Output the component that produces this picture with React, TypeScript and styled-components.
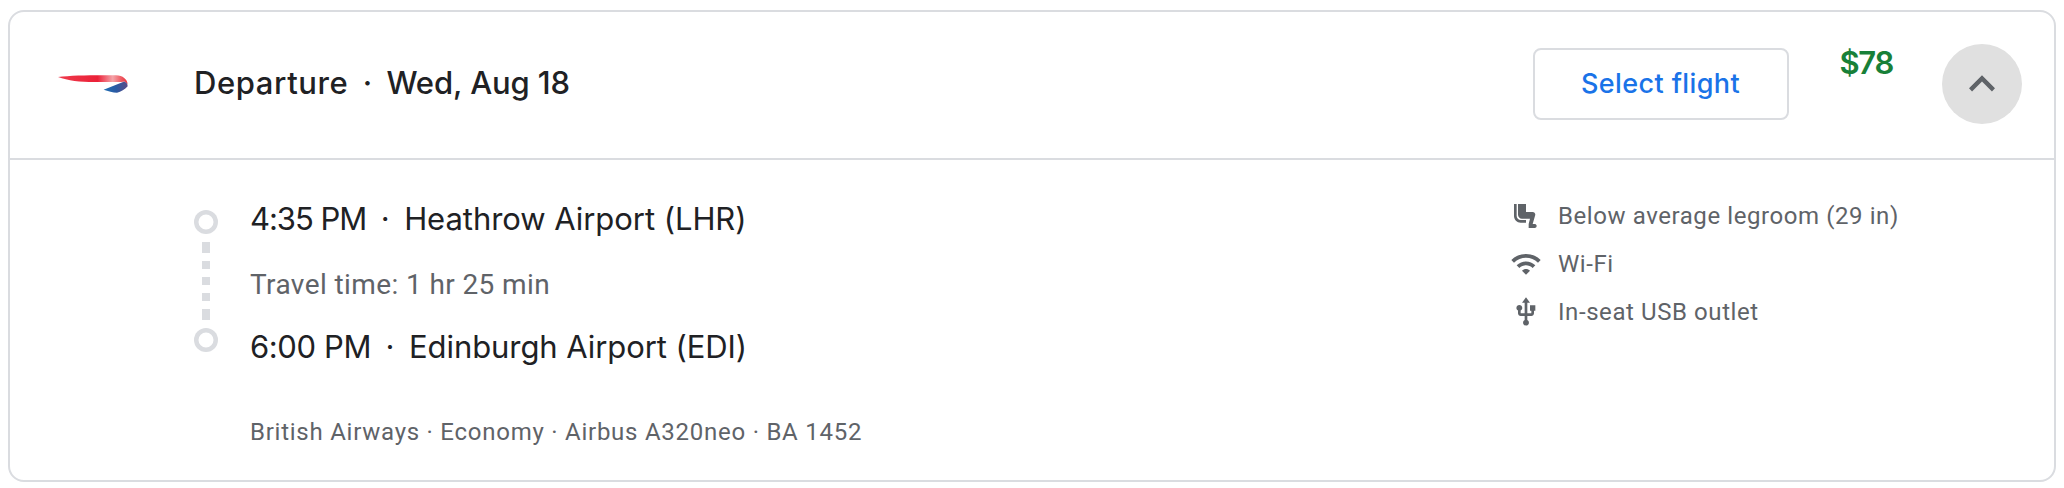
import React from "react";
import styled, { createGlobalStyle } from "styled-components";

const GlobalStyle = createGlobalStyle`
  *, *::before, *::after { box-sizing: border-box; }
  body { margin: 0; background: #fff; }
`;

const display = `Inter, "Liberation Sans", sans-serif`;
const body = `Roboto, "Liberation Sans", sans-serif`;

const Page = styled.main`
  height: 488px;
  padding: 10px 8px 6px;
  background: #fff;
`;

const Card = styled.section`
  display: flex;
  flex-direction: column;
  height: 472px;
  border: 2px solid #dadce0;
  border-radius: 16px;
  overflow: hidden;
`;

const Header = styled.header`
  display: flex;
  align-items: center;
  height: 148px;
  padding: 0 32px 2px 48px;
  border-bottom: 2px solid #dadce0;
`;

const Logo = styled.svg`
  display: block;
  width: 72px;
  height: 24px;
  margin-right: 64px;
`;

const Title = styled.h3`
  display: flex;
  flex: 1;
  margin: 0;
  padding-bottom: 3px;
  font: 500 31px/40px ${display};
  color: #202124;
`;

const Segment = styled.span<{ $spacing: number }>`
  letter-spacing: ${(p) => p.$spacing}px;
  white-space: nowrap;
`;

const Separator = styled.span`
  width: 38px;
  text-align: center;
`;

const SelectButton = styled.button`
  width: 256px;
  height: 72px;
  padding: 0 1px 1px 0;
  border: 2px solid #dadce0;
  border-radius: 8px;
  background: #fff;
  font: 500 27px/36px ${display};
  letter-spacing: 0.4px;
  color: #1a73e8;
`;

const Price = styled.span`
  align-self: flex-start;
  width: 104px;
  margin-top: 31px;
  font: 600 31px/40px ${display};
  letter-spacing: -1.3px;
  text-align: right;
  color: #188038;
`;

const Toggle = styled.button`
  display: flex;
  align-items: center;
  justify-content: center;
  width: 80px;
  height: 80px;
  margin-left: 49px;
  padding: 0;
  border: 0;
  border-radius: 50%;
  background: #e0e0e0;
`;

const Icon = styled.svg<{ $size: number }>`
  display: block;
  flex: none;
  width: ${(p) => p.$size}px;
  height: ${(p) => p.$size}px;
  fill: #5f6368;
`;

const Details = styled.div`
  display: flex;
  flex: 1;
  padding-left: 184px;
`;

const Track = styled.div`
  display: flex;
  flex-direction: column;
  align-items: center;
  gap: 8px;
  width: 24px;
  padding-top: 50px;
`;

const Stop = styled.span`
  width: 24px;
  height: 24px;
  border-radius: 50%;
  box-shadow: inset 0 0 0 4.5px #dadce0;
`;

const Dash = styled.span<{ $length: number }>`
  width: 8px;
  height: ${(p) => p.$length}px;
  background: #dadce0;
`;

const Itinerary = styled.div`
  flex: 1;
  margin-left: 32px;
  padding-top: 39px;
`;

const Endpoint = styled.div`
  display: flex;
  font: 400 31px/40px ${display};
  color: #202124;
`;

const TravelTime = styled.div`
  margin: 28px 0 24px;
  font: 400 28px/36px ${body};
  letter-spacing: 0.4px;
  color: #5f6368;
`;

const FlightInfo = styled.div`
  margin-top: 49px;
  font: 400 24px/32px ${body};
  letter-spacing: 0.75px;
  color: #5f6368;
`;

const Amenities = styled.ul`
  display: flex;
  flex-direction: column;
  gap: 16px;
  width: 544px;
  margin: 0;
  padding: 40px 0 0;
  list-style: none;
`;

const Amenity = styled.li`
  display: flex;
  gap: 16px;
  font: 400 24px/32px ${body};
  letter-spacing: 0.58px;
  color: #5f6368;
`;

const amenities = [
  {
    label: "Below average legroom (29 in)",
    path: "M19.97 19.2c.18.96-.55 1.8-1.47 1.8H14v-3l1-4H9c-1.65 0-3-1.35-3-3V3h6v6h5c1.1 0 2 .9 2 2l-2 7h1.44c.73 0 1.39.49 1.53 1.2zM5 12V3H3v9c0 2.76 2.24 5 5 5h4v-2H8c-1.66 0-3-1.34-3-3z",
  },
  {
    label: "Wi-Fi",
    path: "M1 9l2 2c4.97-4.97 13.03-4.97 18 0l2-2C16.93 2.93 7.08 2.93 1 9zm8 8l3 3 3-3c-1.65-1.66-4.34-1.66-6 0zm-4-4l2 2c2.76-2.76 7.24-2.76 10 0l2-2C15.14 9.14 8.87 9.14 5 13z",
  },
  {
    label: "In-seat USB outlet",
    path: "M15 7v4h1v2h-3V5h2l-3-4-3 4h2v8H8v-2.07c.7-.37 1.2-1.08 1.2-1.93 0-1.21-.99-2.2-2.2-2.2-1.21 0-2.2.99-2.2 2.2 0 .85.5 1.56 1.2 1.93V13c0 1.11.89 2 2 2h3v3.05c-.71.37-1.2 1.1-1.2 1.95 0 1.22.99 2.2 2.2 2.2 1.21 0 2.2-.98 2.2-2.2 0-.85-.49-1.58-1.2-1.95V15h3c1.11 0 2-.89 2-2v-2h1V7h-4z",
  },
];

const AirlineLogo = () => (
  <Logo viewBox="0 0 72 24" aria-label="British Airways">
    <defs>
      <linearGradient id="red" gradientUnits="userSpaceOnUse" x1="0" y1="0" x2="72" y2="0">
        <stop offset="0" stopColor="#ee3a4c" />
        <stop offset="0.55" stopColor="#eb2138" />
        <stop offset="0.76" stopColor="#f4a3a8" />
        <stop offset="0.88" stopColor="#ef5a62" />
        <stop offset="1" stopColor="#e3202f" />
      </linearGradient>
      <linearGradient id="blue" gradientUnits="userSpaceOnUse" x1="46" y1="0" x2="70" y2="0">
        <stop offset="0" stopColor="#1e6fb5" />
        <stop offset="0.5" stopColor="#2a5aa3" />
        <stop offset="1" stopColor="#5a4a86" />
      </linearGradient>
    </defs>
    <path d="M0 4.900C14 3.200 36 3 58 3.200C65 3.500 69 7 69.700 12L66.500 9.500C65 10 62 10 58 10H36C22 10 10 8.500 0 4.900Z" fill="url(#red)" />
    <path d="M45.600 17.700L66.300 9.400C68.800 10.500 70 12 69.500 14.500C67 17.500 63 19.500 59 20.700C55 20.500 50 19.200 45.600 17.700Z" fill="url(#blue)" />
  </Logo>
);

export default function App() {
  return (
    <Page>
      <GlobalStyle />
      <Card>
        <Header>
          <AirlineLogo />
          <Title>
            <Segment $spacing={0.6}>Departure</Segment>
            <Separator>·</Separator>
            <Segment $spacing={-0.1}>Wed, Aug 18</Segment>
          </Title>
          <SelectButton>Select flight</SelectButton>
          <Price>$78</Price>
          <Toggle aria-label="Collapse">
            <Icon $size={52} viewBox="0 0 24 24">
              <path d="M12 8l-6 6 1.410 1.410L12 10.830l4.590 4.580L18 14z" />
            </Icon>
          </Toggle>
        </Header>
        <Details>
          <Track>
            <Stop />
            {[11, 8, 8, 8, 11].map((length, i) => (
              <Dash key={i} $length={length} />
            ))}
            <Stop />
          </Track>
          <Itinerary>
            <Endpoint>
              <Segment $spacing={-1.05}>4:35 PM</Segment>
              <Separator>·</Separator>
              <Segment $spacing={-0.05}>Heathrow Airport (LHR)</Segment>
            </Endpoint>
            <TravelTime>Travel time: 1 hr 25 min</TravelTime>
            <Endpoint>
              <Segment $spacing={-0.4}>6:00 PM</Segment>
              <Separator>·</Separator>
              <Segment $spacing={-0.07}>Edinburgh Airport (EDI)</Segment>
            </Endpoint>
            <FlightInfo>British Airways · Economy · Airbus A320neo · BA 1452</FlightInfo>
          </Itinerary>
          <Amenities>
            {amenities.map((item) => (
              <Amenity key={item.label}>
                <Icon $size={32} viewBox="0 0 24 24">
                  <path d={item.path} />
                </Icon>
                {item.label}
              </Amenity>
            ))}
          </Amenities>
        </Details>
      </Card>
    </Page>
  );
}
